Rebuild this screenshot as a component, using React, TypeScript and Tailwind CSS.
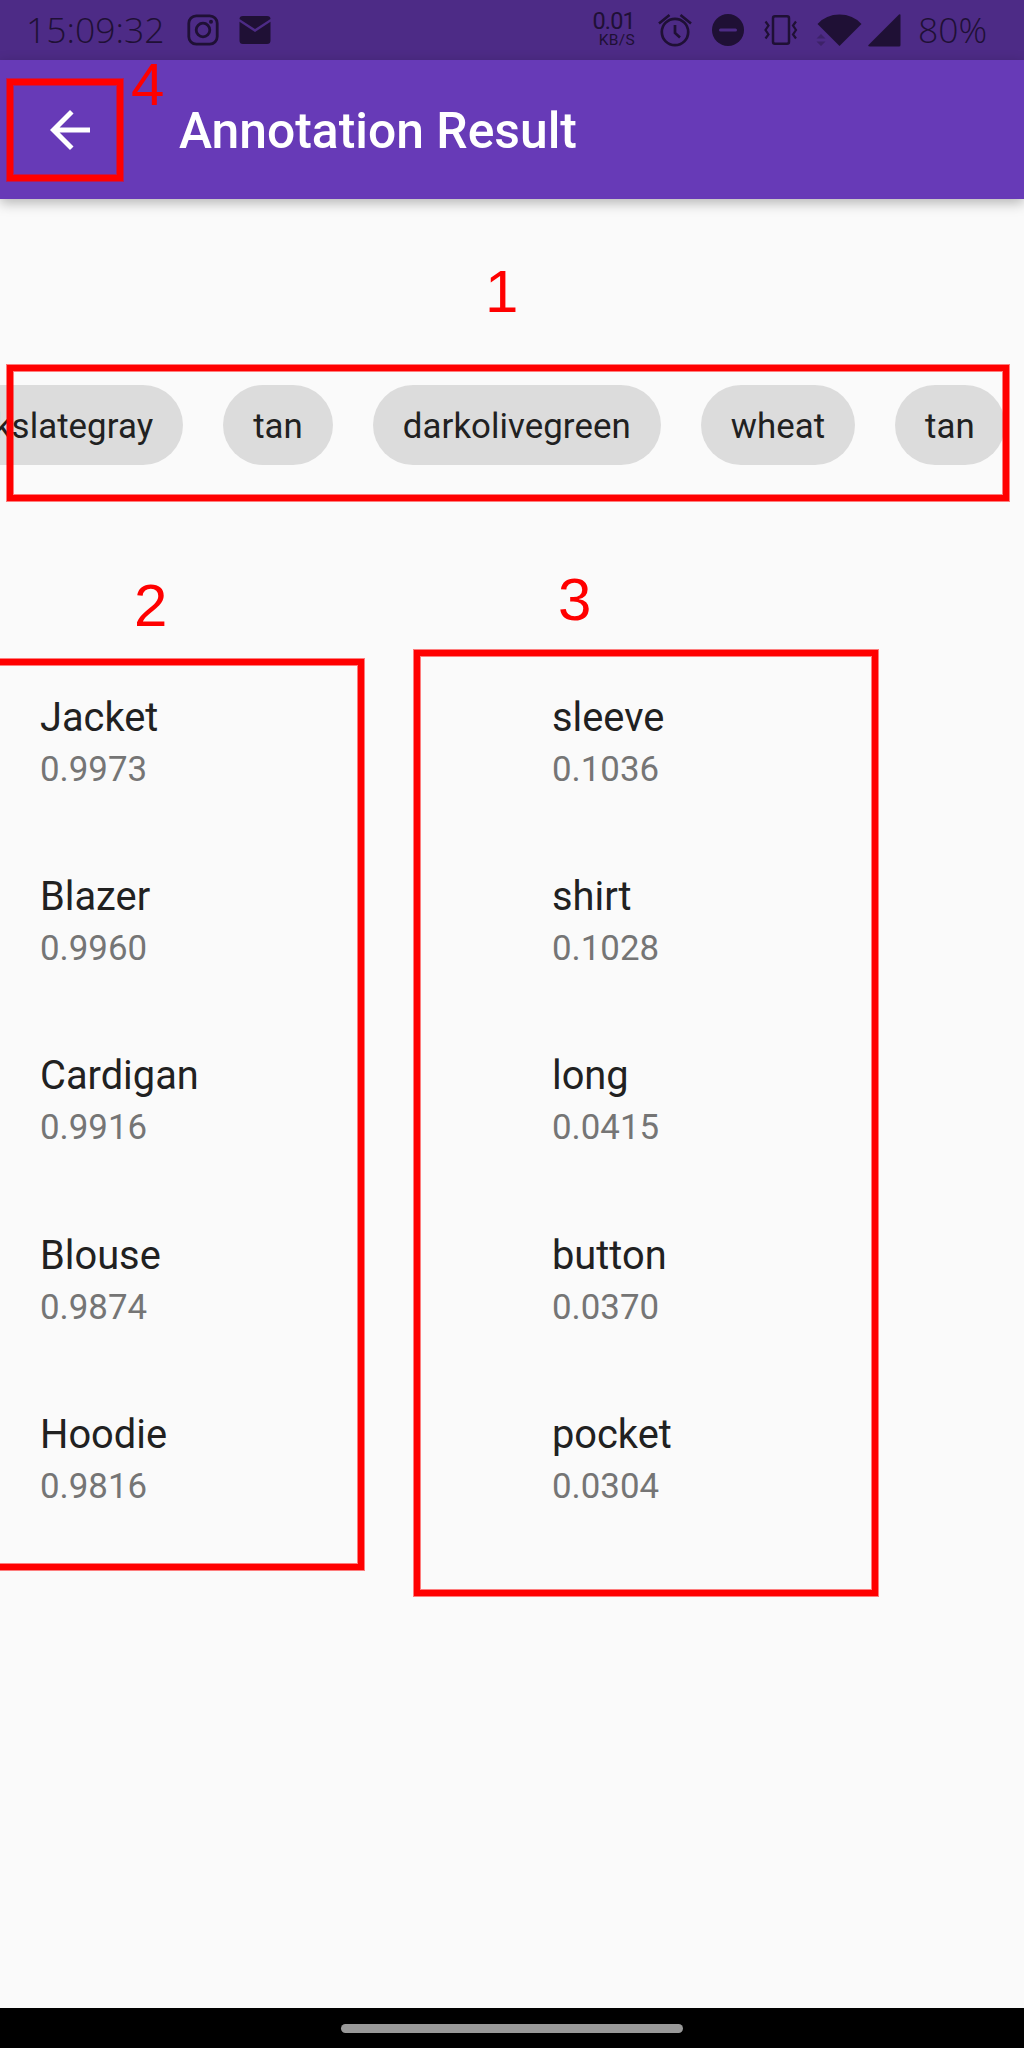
import type { ReactNode } from "react";

const chips = ["darkslategray", "tan", "darkolivegreen", "wheat", "tan"];

const categories = [
  ["Jacket", "0.9973"],
  ["Blazer", "0.9960"],
  ["Cardigan", "0.9916"],
  ["Blouse", "0.9874"],
  ["Hoodie", "0.9816"],
];

const attributes = [
  ["sleeve", "0.1036"],
  ["shirt", "0.1028"],
  ["long", "0.0415"],
  ["button", "0.0370"],
  ["pocket", "0.0304"],
];

function StatusBar() {
  return (
    <div className="flex h-[60px] shrink-0 items-center bg-[#4d2b86] text-[#1f1035]">
      <span className="ml-[26px] w-[142px] pb-[2px] font-['Open_Sans'] text-[35.5px] leading-[58px] font-light whitespace-nowrap">
        15:09:32
      </span>
      <svg className="ml-[19px] h-8 w-8" viewBox="0 0 32 32" fill="none" stroke="currentColor">
        <rect x="1.8" y="1.8" width="28.4" height="28.4" rx="7.5" strokeWidth="2.8" />
        <circle cx="16" cy="16" r="6.8" strokeWidth="2.8" />
        <circle cx="24" cy="7.8" r="2" fill="currentColor" stroke="none" />
      </svg>
      <svg className="ml-5 h-7 w-8" viewBox="0 0 32 28" fill="currentColor">
        <path d="M4 0H28Q31.5 0 31.5 3L16 13 .5 3Q.5 0 4 0ZM.5 5.8 16 16 31.5 5.8V24.5Q31.5 28 28 28H4Q.5 28 .5 24.5Z" />
      </svg>
      <div className="ml-[320px] flex w-[44px] flex-col items-end font-[Roboto]">
        <span className="text-[23.5px] leading-[21px] tracking-[-0.8px] whitespace-nowrap">0.01</span>
        <span className="text-[15.5px] leading-[17px] tracking-[0.3px] whitespace-nowrap">KB/S</span>
      </div>
      <svg className="ml-[22px] h-[34px] w-[36px]" viewBox="0 0 36 34" fill="none" stroke="currentColor" strokeWidth="2.7">
        <circle cx="18" cy="19" r="13.2" />
        <path d="M2 10.5 12.5 2M34 10.5 23.5 2M18 12v8l5 4.5" />
      </svg>
      <svg className="ml-[19px] h-8 w-8" viewBox="0 0 32 32">
        <circle cx="16" cy="16" r="16" fill="currentColor" />
        <path d="M8.5 16h15" stroke="#4d2b86" strokeWidth="3" strokeLinecap="round" />
      </svg>
      <svg className="ml-[20px] h-[30px] w-[34px]" viewBox="0 0 34 30" fill="none" stroke="currentColor" strokeWidth="2.5">
        <rect x="9" y="1.3" width="16" height="27.4" rx="2" />
        <path d="m1.5 6.500 3 4-3 4.500 3 4.500-3 4M32 6.500l-3 4 3 4.500-3 4.500 3 4" strokeWidth="2.2" />
      </svg>
      <svg className="ml-[18px] h-8 w-[46px]" viewBox="0 0 46 32" fill="currentColor">
        <path d="M1.500 10Q10 .5 23.500.5T45.500 10L23.500 32Z" />
        <path d="m.5 24.500 4.500-4.500 4.500 4.500ZM.5 27.500H9.500L5 32Z" opacity=".35" />
      </svg>
      <svg className="ml-[6px] h-[33px] w-[33px]" viewBox="0 0 33 33" fill="currentColor">
        <path d="M.5 31 31 .5q1.500-1 1.500 1V31q0 1.500-1.500 1.500H2Q-.5 32.500.5 31Z" />
      </svg>
      <span className="ml-[17px] pb-[2px] font-['Open_Sans'] text-[35.5px] leading-[58px] font-light whitespace-nowrap">
        80%
      </span>
    </div>
  );
}

function AppBar() {
  return (
    <header className="flex h-[139px] shrink-0 items-center bg-[#673ab7] text-white shadow-[0_4px_12px_rgba(0,0,0,0.28)]">
      <svg className="ml-[50px] h-10 w-10" viewBox="4 4 16 16" fill="currentColor">
        <path d="M20 11H7.83l5.590-5.590L12 4l-8 8 8 8 1.410-1.410L7.830 13H20v-2z" />
      </svg>
      <h1 className="ml-[89px] pt-[3px] text-[49.8px] leading-[60px] font-medium whitespace-nowrap">
        Annotation Result
      </h1>
    </header>
  );
}

function ResultList({ items }: { items: string[][] }) {
  return (
    <ul className="w-1/2 pl-10">
      {items.map(([name, score]) => (
        <li key={name} className="flex h-[179.2px] flex-col pt-[43px]">
          <span className="text-[39.8px] leading-[47px] text-[#212121]">{name}</span>
          <span className="mt-[8px] text-[34.84px] leading-[41px] text-[#757575]">{score}</span>
        </li>
      ))}
    </ul>
  );
}

function Frame({ className }: { className: string }) {
  return (
    <div
      className={`absolute border-6 border-[#ff0000] shadow-[0_0_0_1px_rgba(255,0,0,0.5),inset_0_0_0_1px_rgba(255,0,0,0.5)] ${className}`}
    />
  );
}

function Marker({ className, children }: { className: string; children: ReactNode }) {
  return (
    <span className={`absolute font-['Liberation_Sans'] text-[60px] leading-[60px] text-[#ff0000] ${className}`}>
      {children}
    </span>
  );
}

export default function App() {
  return (
    <div className="relative flex h-[2048px] w-[1024px] flex-col overflow-hidden bg-[#fafafa] font-[Roboto,sans-serif]">
      <StatusBar />
      <AppBar />
      <main className="flex-1">
        <div className="mt-[186px] flex w-[1005px] justify-end gap-[39.6px]">
          {chips.map((chip, i) => (
            <span
              key={i}
              className="flex h-20 shrink-0 items-center rounded-full bg-[#dcdcdc] px-[30.2px] pt-[4px] text-[34.84px] tracking-[0.05px] text-[#212121]"
            >
              {chip}
            </span>
          ))}
        </div>
        <div className="mt-[186px] flex">
          <ResultList items={categories} />
          <ResultList items={attributes} />
        </div>
      </main>
      <footer className="flex h-10 shrink-0 justify-center bg-black pt-4">
        <div className="h-[9px] w-[342px] rounded-full bg-[#999999]" />
      </footer>

      <Frame className="top-[79px] left-[7px] h-[102px] w-[116px]" />
      <Frame className="top-[365px] left-[7px] h-[136px] w-[1002px]" />
      <Frame className="top-[659px] left-[-10px] h-[911px] w-[374px]" />
      <Frame className="top-[650px] left-[414px] h-[946px] w-[464px]" />
      <Marker className="top-[55px] left-[131px]">4</Marker>
      <Marker className="top-[262px] left-[485px]">1</Marker>
      <Marker className="top-[576px] left-[134px]">2</Marker>
      <Marker className="top-[570px] left-[558px]">3</Marker>
    </div>
  );
}
